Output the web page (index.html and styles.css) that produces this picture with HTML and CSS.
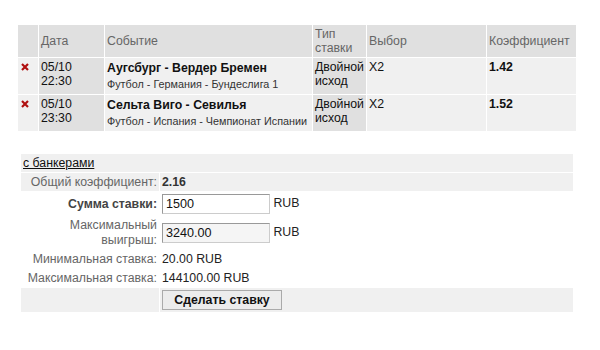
FILE: index.html
```html
<!DOCTYPE html>
<html lang="ru">
<head>
    <meta charset="UTF-8">
    <title>Купон</title>
    <link rel="stylesheet" href="styles.css">
</head>
<body>
    <table class="bets">
        <thead>
            <tr>
                <th class="c-del"></th>
                <th class="c-date">Дата</th>
                <th class="c-event">Событие</th>
                <th class="c-type">Тип ставки</th>
                <th class="c-pick">Выбор</th>
                <th class="c-odds">Коэффициент</th>
            </tr>
        </thead>
        <tbody>
            <tr>
                <td class="del">
                    <svg class="x" width="8" height="8" viewBox="0 0 8 8"><path d="M1 1L7 7M7 1L1 7"/></svg>
                </td>
                <td class="dark">05/10<br>22:30</td>
                <td>
                    <div class="match">Аугсбург - Вердер Бремен</div>
                    <div class="league">Футбол - Германия - Бундеслига 1</div>
                </td>
                <td class="dark">Двойной исход</td>
                <td>X2</td>
                <td class="odds">1.42</td>
            </tr>
            <tr>
                <td class="del">
                    <svg class="x" width="8" height="8" viewBox="0 0 8 8"><path d="M1 1L7 7M7 1L1 7"/></svg>
                </td>
                <td class="dark">05/10<br>23:30</td>
                <td>
                    <div class="match">Сельта Виго - Севилья</div>
                    <div class="league">Футбол - Испания - Чемпионат Испании</div>
                </td>
                <td class="dark">Двойной исход</td>
                <td>X2</td>
                <td class="odds">1.52</td>
            </tr>
        </tbody>
    </table>

    <table class="slip">
        <colgroup>
            <col class="c-lbl">
            <col>
        </colgroup>
        <tr class="grey">
            <td colspan="2" class="mode"><a href="#">с банкерами</a></td>
        </tr>
        <tr class="grey">
            <td class="lbl">Общий коэффициент:</td>
            <td class="val"><b>2.16</b></td>
        </tr>
        <tr>
            <td class="lbl strong">Сумма ставки:</td>
            <td class="val"><input class="field" type="text" value="1500"> RUB</td>
        </tr>
        <tr>
            <td class="lbl two">Максимальный<br>выигрыш:</td>
            <td class="val"><input class="field ro" type="text" value="3240.00" readonly> RUB</td>
        </tr>
        <tr>
            <td class="lbl">Минимальная ставка:</td>
            <td class="val">20.00 RUB</td>
        </tr>
        <tr>
            <td class="lbl">Максимальная ставка:</td>
            <td class="val">144100.00 RUB</td>
        </tr>
        <tr class="grey">
            <td></td>
            <td class="val"><button class="place">Сделать ставку</button></td>
        </tr>
    </table>
</body>
</html>
```

FILE: styles.css
```css
body {
    margin: 0;
    padding: 24px 0 0 17px;
    font-family: "Liberation Sans", Arial, sans-serif;
    font-size: 12.3px;
    color: #111;
    background: #fff;
}

table {
    border-collapse: separate;
    border-spacing: 1px;
}

/* events */

.bets {
    table-layout: fixed;
    width: 560px;
}

.c-del { width: 20px; }
.c-date { width: 65px; }
.c-event { width: 207px; }
.c-type { width: 53px; }
.c-pick { width: 119px; }
.c-odds { width: 89px; }

.bets th {
    box-sizing: border-box;
    height: 32px;
    padding: 2px 2px;
    background: #e0e0e0;
    color: #666;
    font-weight: normal;
    text-align: left;
    vertical-align: middle;
    line-height: 14px;
}

.bets td {
    height: 32px;
    padding: 2px 2px;
    background: #f0f0f0;
    vertical-align: top;
    line-height: 14px;
}

.bets td.dark {
    background: #e0e0e0;
}

.bets td.del {
    padding-left: 3px;
}

.x {
    display: block;
    margin-top: 3px;
    stroke: #b01010;
    stroke-width: 2.2;
}

.match {
    font-weight: bold;
    line-height: 17px;
}

.league {
    font-size: 10.8px;
    line-height: 15px;
    color: #333;
    white-space: nowrap;
}

.odds {
    font-weight: bold;
}

/* slip */

.slip {
    table-layout: fixed;
    width: 554px;
    margin: 21px 0 0 3px;
}

.c-lbl {
    width: 138px;
}

.slip td {
    padding: 1px 2px;
    line-height: 16px;
    vertical-align: middle;
}

.slip tr.grey td {
    background: #f0f0f0;
}

.mode a {
    color: #111;
}

.lbl {
    text-align: right;
    color: #666;
    white-space: nowrap;
}

.lbl.two {
    line-height: 15px;
}

.lbl.strong {
    font-weight: bold;
    color: #444;
}

.val {
    color: #222;
}

.val b {
    color: #333;
}

.field {
    box-sizing: border-box;
    width: 108px;
    height: 20px;
    margin: 1px 0;
    padding: 0 3px;
    border: 1px solid #999;
    border-right-color: #ccc;
    border-bottom-color: #ccc;
    font-family: "Liberation Sans", Arial, sans-serif;
    font-size: 12.6px;
    color: #111;
    vertical-align: middle;
}

.field.ro {
    background: #f5f5f5;
}

.place {
    box-sizing: border-box;
    width: 120px;
    height: 20px;
    margin: 1px 0;
    padding: 0;
    white-space: nowrap;
    font-family: "Liberation Sans", Arial, sans-serif;
    font-size: 12.3px;
    font-weight: bold;
    color: #111;
    background: #ececec;
    border: 1px solid #aaa;
    border-radius: 0;
    vertical-align: middle;
}
```
